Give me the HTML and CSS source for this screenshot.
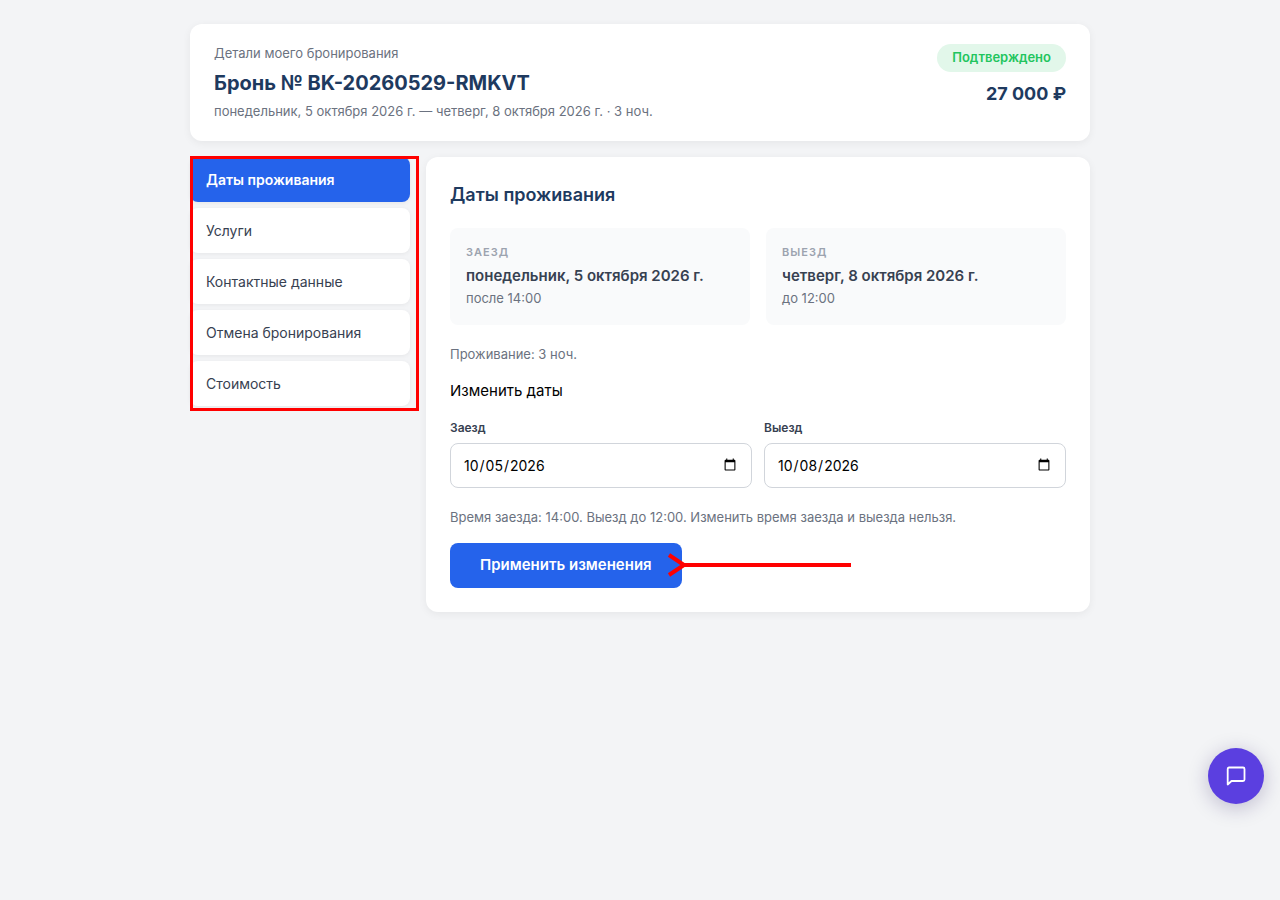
FILE: index.html
```html
<!DOCTYPE html>
<html lang="ru">
<head>
    <meta charset="UTF-8">
    <meta name="viewport" content="width=device-width, initial-scale=1.0">
    <title>Детали моего бронирования</title>
    <link rel="stylesheet" href="styles.css">
</head>
<body>
    <div class="container">
        <header class="card booking-header">
            <div>
                <p class="muted">Детали моего бронирования</p>
                <h1>Бронь № BK-20260529-RMKVT</h1>
                <p class="muted">понедельник, 5 октября 2026 г. — четверг, 8 октября 2026 г. · 3 ноч.</p>
            </div>
            <div class="booking-status">
                <span class="badge">Подтверждено</span>
                <span class="price">27 000 ₽</span>
            </div>
        </header>

        <div class="layout">
            <nav class="menu">
                <button type="button" class="menu-item active">Даты проживания</button>
                <button type="button" class="menu-item">Услуги</button>
                <button type="button" class="menu-item">Контактные данные</button>
                <button type="button" class="menu-item">Отмена бронирования</button>
                <button type="button" class="menu-item">Стоимость</button>
                <div class="menu-frame"></div>
            </nav>

            <main class="card content">
                <h2>Даты проживания</h2>

                <div class="dates">
                    <div class="date-box">
                        <div class="date-label">Заезд</div>
                        <div class="date-value">понедельник, 5 октября 2026 г.</div>
                        <div class="muted">после 14:00</div>
                    </div>
                    <div class="date-box">
                        <div class="date-label">Выезд</div>
                        <div class="date-value">четверг, 8 октября 2026 г.</div>
                        <div class="muted">до 12:00</div>
                    </div>
                </div>

                <p class="muted">Проживание: 3 ноч.</p>

                <h3>Изменить даты</h3>

                <form>
                    <div class="fields">
                        <div class="field">
                            <label for="checkin">Заезд</label>
                            <input type="date" id="checkin" value="2026-10-05">
                        </div>
                        <div class="field">
                            <label for="checkout">Выезд</label>
                            <input type="date" id="checkout" value="2026-10-08">
                        </div>
                    </div>
                    <p class="muted hint">Время заезда: 14:00. Выезд до 12:00. Изменить время заезда и выезда нельзя.</p>
                    <div class="submit">
                        <button type="submit" class="btn">Применить изменения</button>
                        <svg class="arrow" width="184" height="24" viewBox="0 0 184 24" fill="none" stroke="#ff0000" stroke-width="4">
                            <path d="M184 12H16"/>
                            <path d="M2 2l15 10L2 22"/>
                        </svg>
                    </div>
                </form>
            </main>
        </div>
    </div>

    <button type="button" class="chat-btn" aria-label="Чат">
        <svg width="24" height="24" viewBox="0 0 24 24" fill="none" stroke="#fff" stroke-width="1.8" stroke-linejoin="round">
            <path d="M5 3.5h14a1.5 1.5 0 0 1 1.5 1.5v10.5a1.5 1.5 0 0 1-1.5 1.5H7.5L3.7 20.5V5A1.5 1.5 0 0 1 5 3.5z"/>
        </svg>
    </button>
</body>
</html>
```

FILE: styles.css
```css
* {
    box-sizing: border-box;
    margin: 0;
    padding: 0;
}

body {
    font-family: Inter, "Liberation Sans", sans-serif;
    font-size: 14px;
    line-height: 1.5;
    background-color: #f3f4f6;
    color: #000;
}

button,
input {
    font-family: inherit;
    line-height: inherit;
}

.container {
    max-width: 900px;
    margin: 24px auto;
}

.card {
    background-color: #fff;
    border-radius: 12px;
    box-shadow: 0 2px 8px rgba(0, 0, 0, 0.06);
}

.muted {
    font-size: 13px;
    color: #6b7280;
}

/* Header */
.booking-header {
    display: flex;
    justify-content: space-between;
    align-items: flex-start;
    padding: 20px 24px;
    margin-bottom: 16px;
}

h1 {
    font-size: 20px;
    font-weight: 700;
    color: #1e3a5f;
    margin: 4px 0;
}

.booking-status {
    display: flex;
    flex-direction: column;
    align-items: flex-end;
    gap: 8px;
}

.badge {
    padding: 4px 15px;
    border-radius: 20px;
    background-color: #e2f7ea;
    color: #22c55e;
    font-size: 13px;
    font-weight: 600;
}

.price {
    font-size: 18px;
    font-weight: 700;
    color: #1e3a5f;
}

/* Layout */
.layout {
    display: grid;
    grid-template-columns: 220px 1fr;
    gap: 16px;
    align-items: start;
}

.menu {
    position: relative;
    display: flex;
    flex-direction: column;
    gap: 6px;
}

.menu-item {
    padding: 12px 16px;
    border: none;
    border-radius: 8px;
    background-color: #fff;
    box-shadow: 0 1px 4px rgba(0, 0, 0, 0.06);
    color: #374151;
    font-size: 14px;
    text-align: left;
    cursor: pointer;
}

.menu-item.active {
    background-color: #2563eb;
    color: #fff;
    font-weight: 600;
}

.menu-frame {
    position: absolute;
    top: -1px;
    left: 0;
    right: -9px;
    bottom: -5px;
    border: 3px solid #ff0000;
    pointer-events: none;
}

.content {
    padding: 24px;
}

h2 {
    font-size: 18px;
    font-weight: 600;
    color: #1e3a5f;
    margin-bottom: 20px;
}

.dates {
    display: grid;
    grid-template-columns: 1fr 1fr;
    gap: 16px;
    margin-bottom: 20px;
}

.date-box {
    padding: 16px;
    border-radius: 8px;
    background-color: #f9fafb;
}

.date-label {
    font-size: 11px;
    font-weight: 600;
    color: #9ca3af;
    text-transform: uppercase;
    letter-spacing: 1px;
    margin-bottom: 4px;
}

.date-value {
    font-size: 15px;
    font-weight: 600;
    color: #374151;
    margin-bottom: 2px;
}

h3 {
    font-size: 15px;
    font-weight: 400;
    margin: 16px 0;
}

/* Form */
.fields {
    display: grid;
    grid-template-columns: 1fr 1fr;
    gap: 12px;
}

.field {
    display: flex;
    flex-direction: column;
    gap: 6px;
}

.field label {
    font-size: 12px;
    font-weight: 600;
    color: #374151;
}

.field input {
    height: 45px;
    padding: 10px 12px;
    border: 1px solid #d1d5db;
    border-radius: 8px;
    background-color: #fff;
    color: #000;
    font-size: 14px;
}

.hint {
    margin: 20px 0 16px;
}

.submit {
    position: relative;
    display: inline-flex;
}

.btn {
    padding: 11px 30px;
    border: none;
    border-radius: 8px;
    background-color: #2563eb;
    color: #fff;
    font-size: 15px;
    font-weight: 600;
    cursor: pointer;
}

.arrow {
    position: absolute;
    top: 10px;
    left: calc(100% - 15px);
    overflow: visible;
    pointer-events: none;
}

/* Chat */
.chat-btn {
    position: fixed;
    right: 16px;
    bottom: 96px;
    display: flex;
    align-items: center;
    justify-content: center;
    width: 56px;
    height: 56px;
    border: none;
    border-radius: 50%;
    background-color: #5b3fe0;
    box-shadow: 0 4px 20px rgba(30, 20, 90, 0.25);
    cursor: pointer;
}
```
